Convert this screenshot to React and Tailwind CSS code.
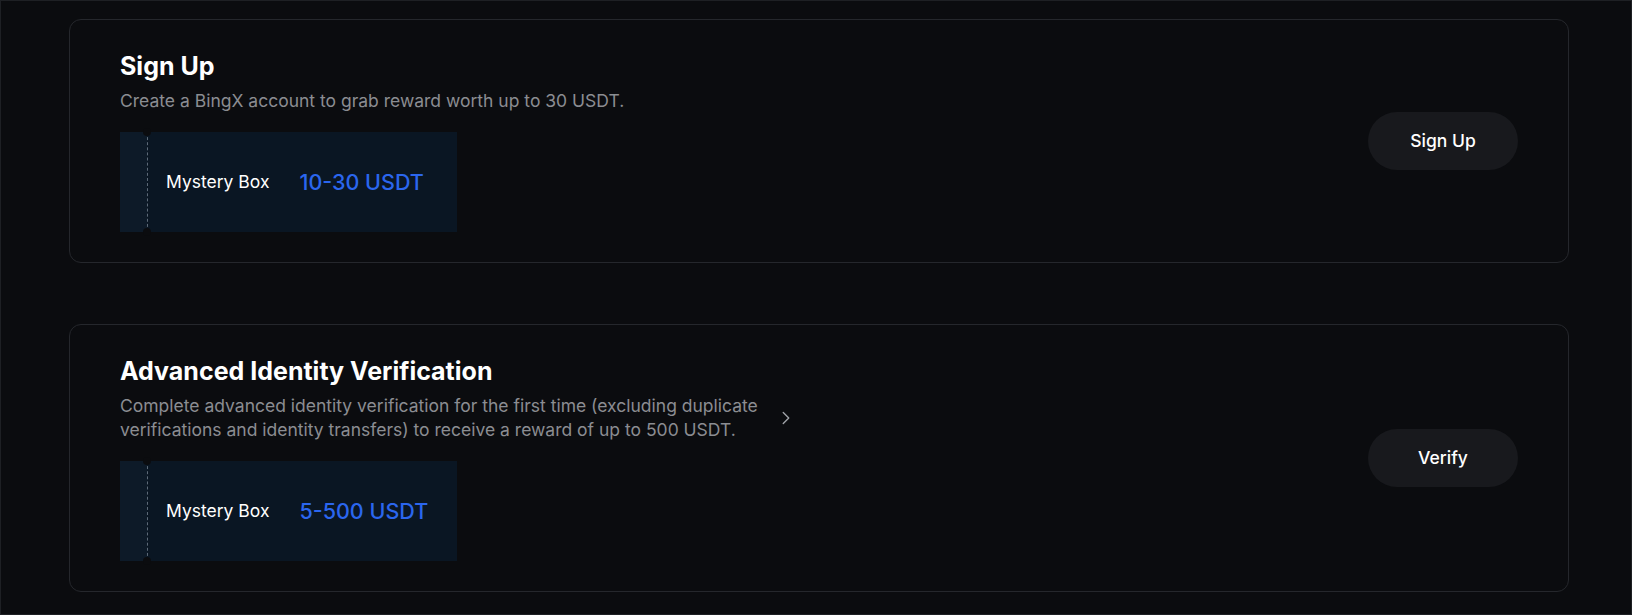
import React from 'react';
import { ChevronRight } from 'lucide-react';

const tasks = [
  {
    title: 'Sign Up',
    desc: 'Create a BingX account to grab reward worth up to 30 USDT.',
    reward: '10-30 USDT',
    action: 'Sign Up',
  },
  {
    title: 'Advanced Identity Verification',
    desc: 'Complete advanced identity verification for the first time (excluding duplicate verifications and identity transfers) to receive a reward of up to 500 USDT.',
    reward: '5-500 USDT',
    action: 'Verify',
    more: true,
  },
];

function Ticket({ reward }) {
  return (
    <div className="relative flex h-[100px] w-[337px] bg-[#0a1623]">
      {/* stub */}
      <div className="w-[27px] shrink-0 bg-[#0d1a28]" />
      <div className="absolute left-[27px] top-0 bottom-0 border-l border-dashed border-[#5d6a78]" />
      <div className="absolute left-[23px] -top-[4px] h-[8px] w-[8px] rounded-full bg-[#0b0c0f]" />
      <div className="absolute left-[23px] -bottom-[4px] h-[8px] w-[8px] rounded-full bg-[#0b0c0f]" />
      <div className="flex items-center pl-[19px]">
        <span className="text-[17.5px] text-white">Mystery Box</span>
        <span className="ml-[30px] text-[21.5px] font-medium text-[#2b66ee]">{reward}</span>
      </div>
    </div>
  );
}

function TaskCard({ task }) {
  return (
    <div className="flex items-center justify-between rounded-xl border border-[#25272c] px-[50px] pt-[30px] pb-[30px]">
      <div>
        <h2 className="text-[25px] font-bold leading-8 text-white">{task.title}</h2>
        <div className="mt-[7px] flex items-center">
          <p className="max-w-[645px] text-[17.5px] leading-6 text-[#8b8d92]">{task.desc}</p>
          {task.more && (
            <ChevronRight size={22} strokeWidth={1.5} className="ml-[10px] text-[#a0a3a8]" />
          )}
        </div>
        <div className="mt-[19px]">
          <Ticket reward={task.reward} />
        </div>
      </div>
      <button className="h-[58px] w-[150px] rounded-full bg-[#18191d] text-[17.5px] font-medium text-white">
        {task.action}
      </button>
    </div>
  );
}

export default function App() {
  return (
    <div
      className="min-h-[615px] border border-[#1e2024] bg-[#0b0c0f] pl-[68px] pt-[18px]"
      style={{ fontFamily: 'Inter, "Noto Sans", sans-serif' }}
    >
      <div className="flex w-[1500px] flex-col gap-[61px]">
        {tasks.map((t) => (
          <TaskCard key={t.title} task={t} />
        ))}
      </div>
    </div>
  );
}
